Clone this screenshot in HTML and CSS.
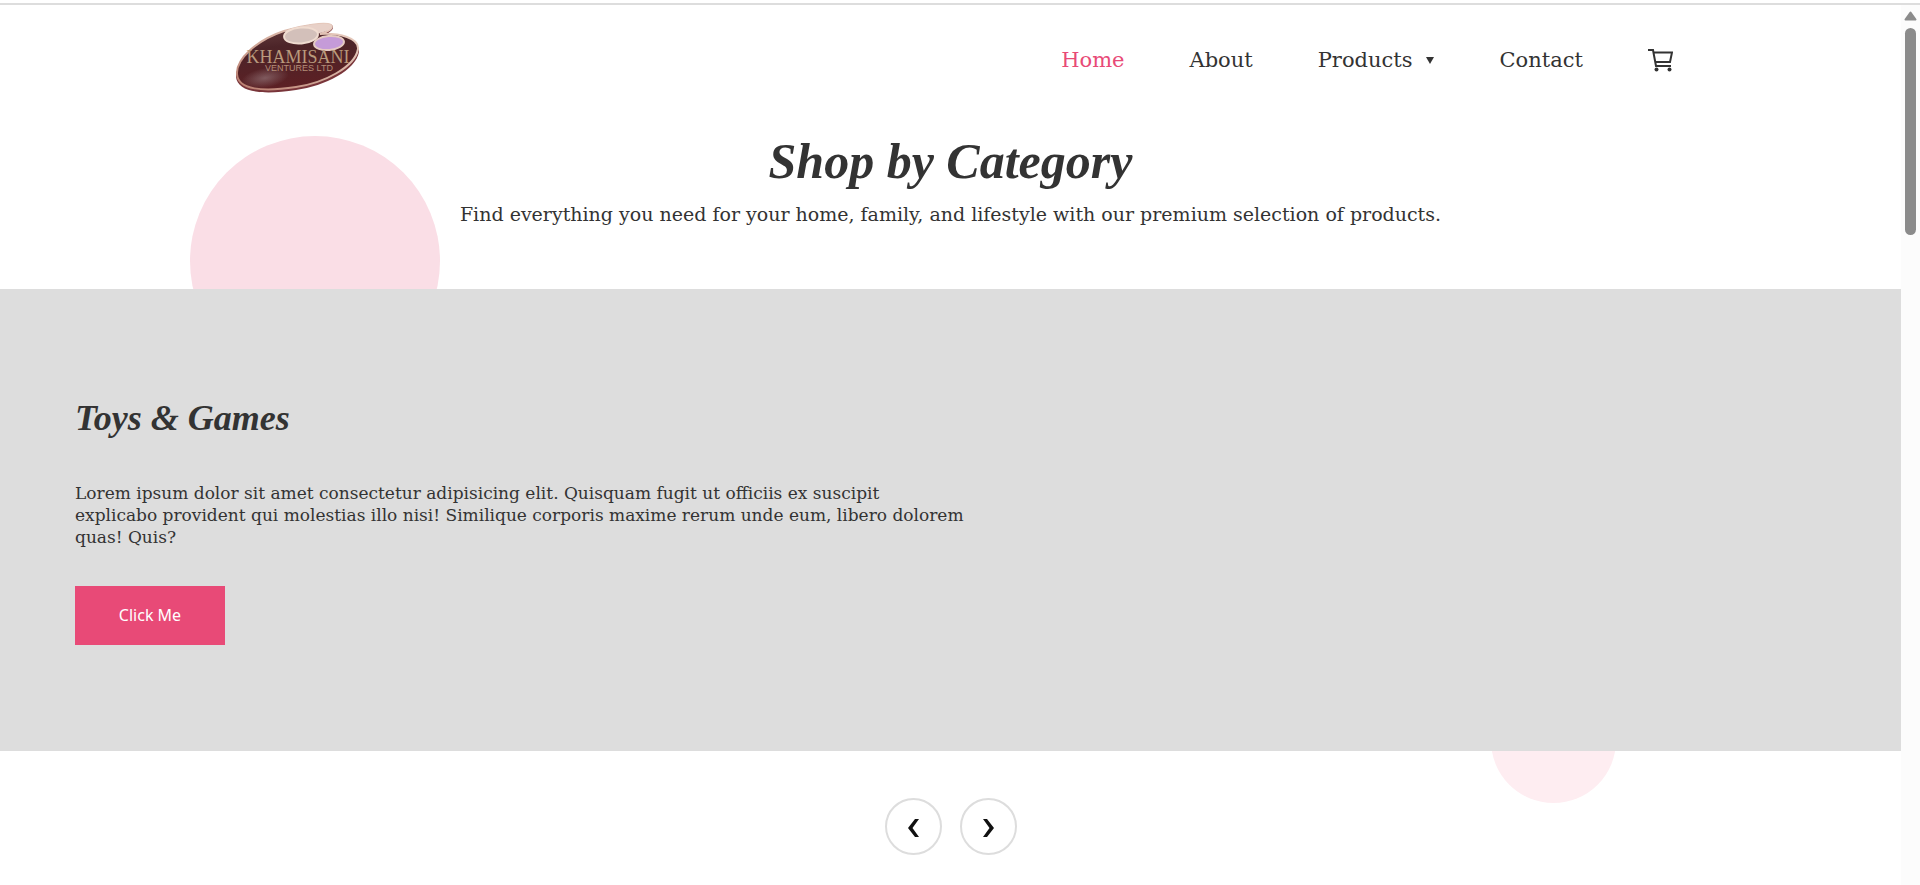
FILE: index.html
```
<!DOCTYPE html>
<html lang="en">
<head>
<meta charset="utf-8">
<meta name="viewport" content="width=device-width, initial-scale=1">
<title>Khamisani Ventures Ltd</title>
<link rel="stylesheet" href="styles.css">
</head>
<body>
<div class="window">
  <div class="page">
    <header class="site-header">
      <a class="logo" href="#" aria-label="Khamisani Ventures Ltd">
        <svg width="140" height="90" viewBox="228 15 140 90">
          <defs>
            <linearGradient id="body" x1="0" y1="0" x2="0.2" y2="1">
              <stop offset="0" stop-color="#6a4244"/>
              <stop offset="0.4" stop-color="#4c2428"/>
              <stop offset="1" stop-color="#5c2024"/>
            </linearGradient>
            <linearGradient id="rim" x1="1" y1="0" x2="0" y2="1">
              <stop offset="0" stop-color="#ecd3c6"/>
              <stop offset="0.6" stop-color="#cfa596"/>
              <stop offset="1" stop-color="#b87b6d"/>
            </linearGradient>
            <radialGradient id="shine">
              <stop offset="0" stop-color="#9a8084" stop-opacity="0.6"/>
              <stop offset="1" stop-color="#9a8084" stop-opacity="0"/>
            </radialGradient>
          </defs>
          <path d="M236 77C236 59 257 41 284 32C302 26 327 22 332 25C335 29 330 33 323 35C341 34 360 40 359 52C356 70 325 86 296 90C264 95 238 93 236 77Z" fill="#79353a"/>
          <path d="M237 74C236 59 257 40 284 31C302 25 326 22 331 25C334 28 328 32 320 34C340 33 359 38 358 49C355 67 324 83 296 87C263 92 238 90 237 74Z" fill="url(#body)" stroke="url(#rim)" stroke-width="2"/>
          <ellipse cx="265" cy="78" rx="24" ry="10" fill="url(#shine)" transform="rotate(-10 265 78)"/>
          <path d="M285 31C302 25 326 22 331 25C334 28 328 31 320 33C316 34 316 35 314 38L290 38Z" fill="#e8d1c8"/>
          <ellipse cx="301" cy="35.500" rx="17" ry="8" fill="#d3c0ba" stroke="#f0dcd0" stroke-width="2" transform="rotate(-5 301 35.500)"/>
          <ellipse cx="329" cy="43" rx="15" ry="7" fill="#c59bd8" stroke="#e5cac2" stroke-width="2" transform="rotate(-5 329 43)"/>
          <text text-anchor="middle"><tspan class="logo-name" x="298" y="63">KHAMISANI</tspan><tspan class="logo-sub" x="299" y="71">VENTURES LTD</tspan></text>
        </svg>
      </a>
      <nav class="nav" aria-label="Main">
        <a class="nav-link active" href="#">Home</a>
        <a class="nav-link" href="#">About</a>
        <a class="nav-link with-caret" href="#">Products
          <svg width="8" height="7" viewBox="0 0 8 7" aria-hidden="true"><path d="M0 0H8L4 7Z" fill="currentColor"/></svg>
        </a>
        <a class="nav-link" href="#">Contact</a>
        <a class="nav-link cart" href="#" aria-label="Cart">
          <svg width="25" height="24" viewBox="0 0 25 24" fill="none" stroke="currentColor" stroke-width="2" aria-hidden="true">
            <path d="M0 2H5L8 18H23M5 4.500H24L22 14H7"/>
            <circle cx="8.500" cy="21.500" r="2" fill="currentColor" stroke="none"/>
            <circle cx="21.500" cy="21.500" r="2" fill="currentColor" stroke="none"/>
          </svg>
        </a>
      </nav>
    </header>
    <main class="categories">
      <div class="circle circle-large"></div>
      <div class="circle circle-small"></div>
      <div class="intro">
        <h1 class="title">Shop by Category</h1>
        <p class="lead">Find everything you need for your home, family, and lifestyle with our premium selection of products.</p>
      </div>
      <section class="slide">
        <div class="slide-content">
          <h2 class="slide-title">Toys &amp; Games</h2>
          <p class="slide-text">Lorem ipsum dolor sit amet consectetur adipisicing elit. Quisquam fugit ut officiis ex suscipit<br>explicabo provident qui molestias illo nisi! Similique corporis maxime rerum unde eum, libero dolorem quas! Quis?</p>
          <button class="slide-button" type="button">Click Me</button>
        </div>
      </section>
      <div class="controls">
        <button class="arrow" type="button" aria-label="Previous">
          <svg width="11" height="18" viewBox="0 0 11 18" aria-hidden="true"><path d="M7 0H11L4.500 9L11 18H7L0 9Z" fill="currentColor"/></svg>
        </button>
        <button class="arrow" type="button" aria-label="Next">
          <svg width="11" height="18" viewBox="0 0 11 18" aria-hidden="true"><path d="M4 0H0L6.500 9L0 18H4L11 9Z" fill="currentColor"/></svg>
        </button>
      </div>
    </main>
  </div>
  <div class="scrollbar" aria-hidden="true">
    <svg width="13" height="10" viewBox="0 0 13 10"><path d="M6.500 1.500L11.500 8.500H1.500Z" fill="#8b8b8b" stroke="#8b8b8b" stroke-width="2" stroke-linejoin="round"/></svg>
    <div class="thumb"></div>
  </div>
</div>
</body>
</html>
```
FILE: styles.css
```
* {
  box-sizing: border-box;
}

body {
  margin: 0;
  padding-top: 3px;
  background: #fff;
  color: #333;
  font-family: "DejaVu Serif", serif;
}

h1, h2, p {
  margin: 0;
}

.window {
  display: flex;
  min-height: calc(100vh - 3px);
  border-top: 2px solid #ddd;
}

.page {
  flex: 1;
  min-width: 0;
}

.site-header {
  display: flex;
  align-items: center;
  justify-content: space-between;
  height: 110px;
  padding: 0 12%;
}

.logo svg {
  display: block;
}

.logo-name {
  font: 18px "Liberation Serif", serif;
  fill: #b99a7c;
}

.logo-sub {
  font: 9px "Liberation Sans", sans-serif;
  fill: #b48d78;
}

.nav {
  display: flex;
  align-items: center;
  gap: 65px;
}

.nav-link {
  color: #333;
  font-size: 21px;
  line-height: 28px;
  text-decoration: none;
}

.nav-link.active {
  color: #e84a77;
}

.with-caret {
  display: flex;
  align-items: center;
  gap: 14px;
}

.cart svg {
  display: block;
}

.categories {
  position: relative;
}

.circle {
  position: absolute;
  z-index: -1;
  border-radius: 50%;
}

.circle-large {
  top: 21px;
  left: 10%;
  width: 250px;
  height: 250px;
  background: #fadee6;
}

.circle-small {
  top: 563px;
  right: 15%;
  width: 125px;
  height: 125px;
  background: #feedf1;
}

.intro {
  display: flex;
  flex-direction: column;
  align-items: center;
  gap: 8px;
  padding: 14px 24px 62px;
  text-align: center;
}

.title {
  font: italic bold 50px/64px "Liberation Serif", serif;
}

.lead {
  font-size: 19px;
  line-height: 26px;
}

.slide {
  padding: 105px 75px 106px;
  background: #ddd;
}

.slide-content {
  display: flex;
  flex-direction: column;
  align-items: flex-start;
  max-width: 912px;
}

.slide-title {
  margin-bottom: 40px;
  font: italic bold 36px/48px "Liberation Serif", serif;
}

.slide-text {
  margin-bottom: 38px;
  font-size: 17px;
  line-height: 22px;
}

.slide-button {
  width: 150px;
  padding: 18px 0 19px;
  border: 0;
  background: #e84a77;
  color: #fff;
  font: 16px/22px "Noto Sans", sans-serif;
}

.controls {
  display: flex;
  justify-content: center;
  gap: 18px;
  padding: 47px 0 25px;
}

.arrow {
  display: flex;
  align-items: center;
  justify-content: center;
  width: 57px;
  height: 57px;
  padding: 3px 0 0;
  border: 2px solid #ddd;
  border-radius: 50%;
  background: #fff;
  color: #111;
}

.scrollbar {
  display: flex;
  flex-direction: column;
  align-items: center;
  gap: 7px;
  width: 19px;
  padding-top: 6px;
  background: #fcfcfc;
}

.thumb {
  width: 11px;
  height: 207px;
  border-radius: 6px;
  background: #8b8b8b;
}
```
